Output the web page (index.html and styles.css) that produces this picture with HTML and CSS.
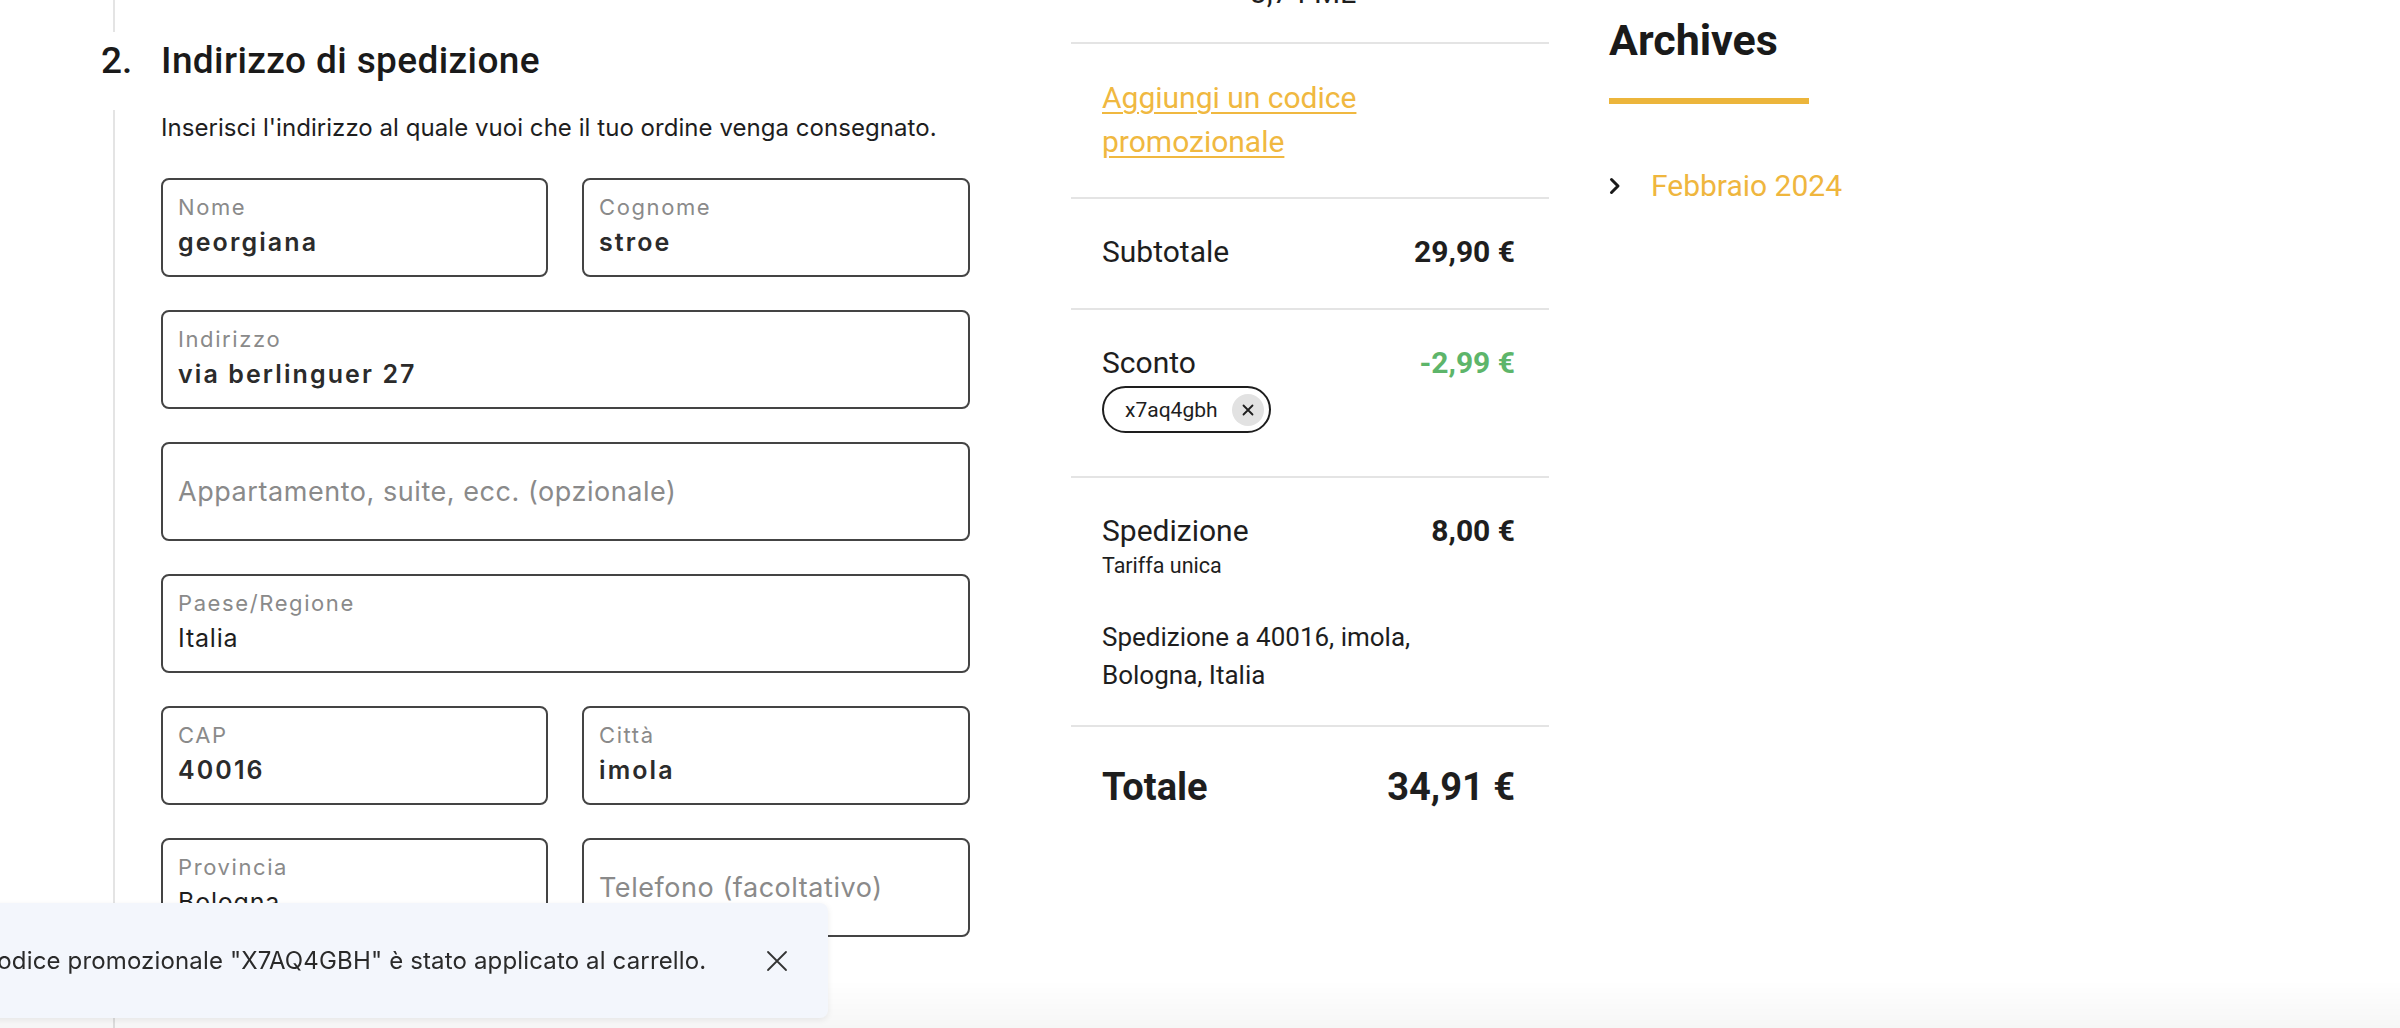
FILE: index.html
```html
<!DOCTYPE html>
<html lang="it">
<head>
<meta charset="utf-8">
<title>Checkout</title>
<link rel="stylesheet" href="styles.css">
</head>
<body>
<div class="page">
  <main class="checkout">
    <div class="prev-step"></div>
    <div class="step-head">
      <span class="step-num">2.</span>
      <h2 class="step-title">Indirizzo di spedizione</h2>
    </div>
    <div class="step-body">
      <p class="step-desc">Inserisci l'indirizzo al quale vuoi che il tuo ordine venga consegnato.</p>
      <div class="fields">
        <div class="field"><span class="label">Nome</span><span class="value">georgiana</span></div>
        <div class="field"><span class="label">Cognome</span><span class="value">stroe</span></div>
        <div class="field wide"><span class="label">Indirizzo</span><span class="value">via berlinguer 27</span></div>
        <div class="field wide empty"><span class="placeholder">Appartamento, suite, ecc. (opzionale)</span></div>
        <div class="field wide"><span class="label">Paese/Regione</span><span class="value plain">Italia</span></div>
        <div class="field"><span class="label">CAP</span><span class="value">40016</span></div>
        <div class="field"><span class="label">Città</span><span class="value">imola</span></div>
        <div class="field"><span class="label">Provincia</span><span class="value plain">Bologna</span></div>
        <div class="field empty"><span class="placeholder">Telefono (facoltativo)</span></div>
      </div>
    </div>
  </main>

  <aside class="summary">
    <div class="item-clip"><span class="item-meta">3,74 ML</span></div>
    <div class="sum-section promo">
      <a class="promo-link" href="#">Aggiungi un codice promozionale</a>
    </div>
    <div class="sum-section subtotal">
      <div class="sum-row"><span>Subtotale</span><strong>29,90&nbsp;€</strong></div>
    </div>
    <div class="sum-section discount">
      <div class="sum-row"><span>Sconto</span><strong class="green">-2,99&nbsp;€</strong></div>
      <span class="chip">x7aq4gbh<span class="chip-x"><svg viewBox="0 0 12 12" width="12" height="12"><path d="M1.5 1.5 L10.5 10.5 M10.5 1.5 L1.5 10.5" stroke="#1e1e1e" stroke-width="1.8" stroke-linecap="round"/></svg></span></span>
    </div>
    <div class="sum-section shipping">
      <div class="sum-row"><span>Spedizione</span><strong>8,00&nbsp;€</strong></div>
      <div class="ship-rate">Tariffa unica</div>
      <p class="ship-address">Spedizione a 40016, imola, Bologna, Italia</p>
    </div>
    <div class="sum-section total">
      <div class="sum-row total-row"><span>Totale</span><strong>34,91&nbsp;€</strong></div>
    </div>
  </aside>

  <aside class="sidebar">
    <h2 class="widget-title">Archives</h2>
    <div class="widget-bar"></div>
    <ul class="archive-list">
      <li><svg class="chev" viewBox="0 0 12 18" width="12" height="18"><path d="M2.5 2.5 L9 9 L2.5 15.5" fill="none" stroke="#1a1a1a" stroke-width="3" stroke-linecap="round" stroke-linejoin="round"/></svg><a href="#">Febbraio 2024</a></li>
    </ul>
  </aside>
</div>

<div class="bottom-fade"></div>

<div class="snackbar">
  <span class="snack-text">Il codice promozionale "X7AQ4GBH" è stato applicato al carrello.</span>
  <svg class="snack-close" viewBox="0 0 22 22" width="22" height="22"><path d="M2 2 L20 20 M20 2 L2 20" stroke="#333" stroke-width="1.8" stroke-linecap="round"/></svg>
</div>
</body>
</html>
```

FILE: styles.css
```css
* { box-sizing: border-box; }
html, body {
  margin: 0;
  padding: 0;
  background: #ffffff;
  font-family: Roboto, "Liberation Sans", Arial, sans-serif;
  color: #1e1e1e;
}
body { height: 1028px; overflow: hidden; }

.page {
  display: grid;
  grid-template-columns: 1071px 478px 1fr;
  height: 1028px;
  overflow: hidden;
}

/* ---------- checkout column ---------- */
.prev-step {
  margin-left: 113px;
  height: 32px;
  border-left: 2px solid #e4e4e4;
}
.step-head {
  display: flex;
  align-items: center;
  height: 44px;
  margin: 7px 0 0 101px;
}
.step-num, .step-title {
  font-size: 37px;
  font-weight: 500;
  line-height: 44px;
  color: #1a1a1a;
  margin: 0;
}
.step-num { width: 60px; }
.step-title { letter-spacing: 0.4px; }

.step-body {
  margin: 27px 0 0 113px;
  border-left: 2px solid #e4e4e4;
  padding-left: 46px;
  min-height: 1000px;
}
.step-desc {
  margin: 0;
  font-family: Inter, Roboto, sans-serif;
  font-size: 24px;
  line-height: 36px;
  color: #1e1e1e;
  letter-spacing: 0.05px;
}
.fields {
  margin-top: 32px;
  display: grid;
  grid-template-columns: 387px 388px;
  column-gap: 34px;
  row-gap: 33px;
  grid-auto-rows: 99px;
}
.field {
  border: 2px solid #444444;
  border-radius: 8px;
  padding: 14px 15px 0 15px;
  display: flex;
  flex-direction: column;
  overflow: hidden;
  background: #fff;
  font-family: Inter, Roboto, sans-serif;
}
.field.wide { grid-column: 1 / -1; }
.field.empty { justify-content: center; padding-top: 0; }
.label {
  font-size: 22px;
  line-height: 26px;
  color: #8a8a8a;
  letter-spacing: 1.6px;
}
.value {
  margin-top: 7px;
  font-size: 25px;
  line-height: 30px;
  font-weight: 600;
  color: #2b2b2b;
  letter-spacing: 2.1px;
}
.value.plain { font-weight: 400; color: #1e1e1e; letter-spacing: 0.8px; }
.placeholder {
  font-size: 27px;
  line-height: 34px;
  color: #8a8a8a;
  letter-spacing: 0.55px;
}

/* ---------- summary ---------- */
.summary { display: flex; flex-direction: column; }
.item-clip {
  height: 44px;
  border-bottom: 2px solid #e4e4e4;
  overflow: hidden;
}
.item-meta {
  display: block;
  margin-top: -22px;
  padding-left: 179px;
  font-size: 30px;
  line-height: 30px;
  color: #1e1e1e;
}
.sum-section {
  border-bottom: 2px solid #e4e4e4;
  padding: 33px 34px 33px 31px;
}
.promo { padding-top: 32px; }
.promo-link {
  font-size: 30px;
  line-height: 44px;
  color: #f0b840;
  text-decoration: underline;
  text-decoration-thickness: 2px;
  text-underline-offset: 4px;
}
.subtotal { padding-bottom: 36px; }
.discount { padding-bottom: 43px; }
.shipping { padding-bottom: 31px; }
.total { border-bottom: none; padding-top: 35px; }

.sum-row {
  display: flex;
  justify-content: space-between;
  align-items: center;
  font-size: 30px;
  line-height: 40px;
}
.sum-row strong { font-weight: 700; }
.sum-row .green { color: #5db56a; }

.chip {
  margin-top: 3px;
  display: inline-flex;
  align-items: center;
  height: 47px;
  border: 2px solid #1e1e1e;
  border-radius: 24px;
  padding: 0 5px 0 21px;
  font-size: 21px;
  color: #1e1e1e;
  gap: 14px;
}
.chip-x {
  width: 32px;
  height: 32px;
  border-radius: 50%;
  background: #e2e2e2;
  display: flex;
  align-items: center;
  justify-content: center;
}
.ship-rate {
  font-size: 21.5px;
  line-height: 30px;
  color: #1e1e1e;
}
.ship-address {
  margin: 37px 0 0 0;
  font-size: 26px;
  line-height: 38px;
  width: 360px;
}
.total-row { font-size: 38px; line-height: 50px; }
.total-row span { font-weight: 700; }

/* ---------- sidebar ---------- */
.sidebar { padding-left: 60px; }
.widget-title {
  margin: 15px 0 0 0;
  font-size: 43px;
  line-height: 50px;
  font-weight: 700;
  color: #1a1a1a;
}
.widget-bar {
  margin-top: 33px;
  width: 200px;
  height: 6px;
  background: #ecb53b;
}
.archive-list {
  list-style: none;
  margin: 62px 0 0 0;
  padding: 0;
}
.archive-list li {
  display: flex;
  align-items: center;
  height: 40px;
}
.chev { margin-right: 30px; margin-left: 0; }
.archive-list a {
  font-size: 30px;
  line-height: 40px;
  color: #efb63e;
  text-decoration: none;
}

/* ---------- overlays ---------- */
.bottom-fade {
  position: fixed;
  left: 0;
  right: 0;
  bottom: 0;
  height: 48px;
  background: linear-gradient(to bottom, rgba(0,0,0,0), rgba(0,0,0,0.035));
  pointer-events: none;
}
.snackbar {
  position: fixed;
  left: -68px;
  top: 903px;
  width: 896px;
  height: 115px;
  background: #f3f6fc;
  border-radius: 8px;
  box-shadow: 0 2px 6px rgba(0,0,0,0.08);
  display: flex;
  align-items: center;
  justify-content: space-between;
  padding: 0 40px 0 32px;
  z-index: 2;
}
.snack-text {
  font-family: Inter, Roboto, sans-serif;
  font-size: 24px;
  line-height: 32px;
  color: #2a2a2a;
  white-space: nowrap;
  letter-spacing: 0.15px;
}
```
